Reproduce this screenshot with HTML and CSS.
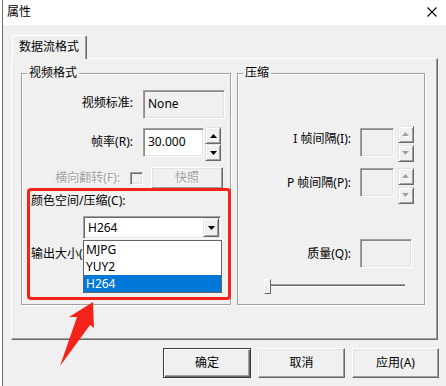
FILE: index.html
```html
<!DOCTYPE html>
<html lang="zh-CN">
<head>
<meta charset="utf-8">
<title>属性</title>
<link rel="stylesheet" href="styles.css">
</head>
<body>
<div class="titlebar">
  <span class="title">属性</span>
  <svg class="close" width="10" height="10" viewBox="0 0 10 10"><path d="M0.5 0.5 L9.5 9.5 M9.5 0.5 L0.5 9.5" stroke="#000" stroke-width="1.1" fill="none"/></svg>
</div>
<div class="content">
  <div class="tabs"><div class="tab">数据流格式</div></div>
  <div class="panel">
    <div class="group group-video">
      <div class="legend">视频格式</div>
      <div class="row row-std">
        <span class="lbl">视频标准:</span>
        <div class="edit ro edit-none">None</div>
      </div>
      <div class="row row-fps">
        <span class="lbl">帧率(R):</span>
        <div class="edit edit-fps">30.000</div>
        <div class="spin">
          <div class="sbtn"><svg width="7" height="4" viewBox="0 0 7 4"><polygon points="3.5,0 7,4 0,4" fill="#000"/></svg></div>
          <div class="sbtn"><svg width="7" height="4" viewBox="0 0 7 4"><polygon points="0,0 7,0 3.5,4" fill="#000"/></svg></div>
        </div>
      </div>
      <div class="row row-flip">
        <span class="lbl lbl-flip disabled">横向翻转(F):</span>
        <span class="check"></span>
        <div class="btn btn-snap disabled">快照</div>
      </div>
      <div class="plain-label">颜色空间/压缩(C):</div>
      <div class="combo-wrap">
        <div class="combo">
          <span class="combo-text">H264</span>
          <span class="combo-btn"><svg width="7" height="4" viewBox="0 0 7 4"><polygon points="0,0 7,0 3.5,4" fill="#000"/></svg></span>
        </div>
        <ul class="dropdown">
          <li>MJPG</li>
          <li>YUY2</li>
          <li class="sel">H264</li>
        </ul>
      </div>
      <div class="plain-label out-label">输出大小(S):</div>
    </div>
    <div class="group group-comp">
      <div class="legend">压缩</div>
      <div class="row rrow row-i">
        <span class="lbl rlbl">I 帧间隔(I):</span>
        <div class="edit ro redit"></div>
        <div class="spin rspin">
          <div class="sbtn"><svg width="8" height="5" viewBox="0 0 8 5"><polygon points="4.5,1 8,5 1,5" fill="#fff"/><polygon points="3.5,0 7,4 0,4" fill="#a0a0a0"/></svg></div>
          <div class="sbtn"><svg width="8" height="5" viewBox="0 0 8 5"><polygon points="1,1 8,1 4.5,5" fill="#fff"/><polygon points="0,0 7,0 3.5,4" fill="#a0a0a0"/></svg></div>
        </div>
      </div>
      <div class="row rrow row-p">
        <span class="lbl rlbl">P 帧间隔(P):</span>
        <div class="edit ro redit"></div>
        <div class="spin rspin">
          <div class="sbtn"><svg width="8" height="5" viewBox="0 0 8 5"><polygon points="4.5,1 8,5 1,5" fill="#fff"/><polygon points="3.5,0 7,4 0,4" fill="#a0a0a0"/></svg></div>
          <div class="sbtn"><svg width="8" height="5" viewBox="0 0 8 5"><polygon points="1,1 8,1 4.5,5" fill="#fff"/><polygon points="0,0 7,0 3.5,4" fill="#a0a0a0"/></svg></div>
        </div>
      </div>
      <div class="row row-q">
        <span class="lbl rlbl">质量(Q):</span>
        <div class="edit ro qedit"></div>
      </div>
      <div class="slider">
        <span class="thumb"></span>
        <span class="track"></span>
      </div>
    </div>
  </div>
  <div class="buttons">
    <div class="btn dbtn default">确定</div>
    <div class="btn dbtn">取消</div>
    <div class="btn dbtn">应用(A)</div>
  </div>
</div>
<div class="annot-box"></div>
<svg class="annot-arrow" width="446" height="386" viewBox="0 0 446 386">
  <polygon points="93,302 94,328 90,325 60,366 77,317 69,317" fill="#f5221a"/>
</svg>
</body>
</html>
```

FILE: styles.css
```css
* { box-sizing: border-box; }
html, body { margin: 0; padding: 0; }
body {
  width: 446px;
  height: 386px;
  overflow: hidden;
  position: relative;
  font-family: "Noto Sans", "Noto Sans CJK SC", sans-serif;
  font-size: 12px;
  color: #000;
  background: linear-gradient(90deg, #fff 0 2px, #6d6d6d 2px 3px, #f0f0f0 3px);
}
.titlebar {
  height: 25px;
  margin-left: 3px;
  background: #fff;
  display: flex;
  align-items: center;
  justify-content: space-between;
  padding: 0 9px 1px 4px;
}
.title { line-height: 16px; }
.close { display: block; }

.content { padding: 10px 0 0 11px; }
.tabs { display: flex; height: 23px; }
.tab {
  position: relative;
  z-index: 1;
  margin-left: 1px;
  width: 75px;
  height: 24px;
  background: #f0f0f0;
  border-top: 1px solid #fff;
  border-left: 1px solid #fff;
  border-right: 1px solid #696969;
  border-radius: 2px 2px 0 0;
  box-shadow: inset -1px 0 0 #a0a0a0;
  padding-left: 6px;
  line-height: 21px;
}
.panel {
  width: 427px;
  height: 282px;
  border: 1px solid;
  border-color: #fff #696969 #696969 #fff;
  box-shadow: inset -1px -1px 0 #a0a0a0;
  display: flex;
  align-items: flex-start;
  gap: 6px;
  padding: 14px 0 0 9px;
}
.group {
  height: 232px;
  border: 1px solid #a0a0a0;
  box-shadow: 1px 1px 0 #fff, inset 1px 1px 0 #fff;
}
.group-video { width: 210px; }
.group-comp { width: 188px; }
.legend {
  width: fit-content;
  height: 16px;
  line-height: 16px;
  margin: -9px 0 0 5px;
  padding: 0 2px;
  background: #f0f0f0;
}
.row { display: flex; align-items: flex-start; }
.lbl {
  width: 121px;
  padding-right: 10px;
  text-align: right;
  line-height: 16px;
  white-space: nowrap;
}
.disabled { color: #a0a0a0; text-shadow: 1px 1px 0 #fff; }

.edit {
  height: 29px;
  background: #fff;
  border: 1px solid;
  border-color: #a0a0a0 #fff #fff #a0a0a0;
  box-shadow: inset 1px 1px 0 #8a8a8a, inset -1px -1px 0 #e3e3e3;
  display: flex;
  align-items: center;
  padding: 0 0 1px 4px;
  line-height: 16px;
}
.edit.ro { background: #f0f0f0; }

.row-std { margin-top: 9px; height: 29px; }
.row-std .lbl { margin-top: 5px; }
.edit-none { width: 82px; }

.row-fps { margin-top: 8px; height: 34px; }
.row-fps .lbl { margin-top: 7px; }
.edit-fps { width: 61px; margin-top: 1px; }
.spin { display: flex; flex-direction: column; gap: 0; margin-left: 1px; }
.sbtn {
  width: 16px;
  height: 17px;
  background: #f0f0f0;
  border: 1px solid;
  border-color: #e3e3e3 #696969 #696969 #e3e3e3;
  box-shadow: inset 1px 1px 0 #fff, inset -1px -1px 0 #a0a0a0;
  display: flex;
  align-items: center;
  justify-content: center;
}
.sbtn svg { display: block; }

.row-flip { margin-top: 6px; height: 22px; align-items: center; }
.lbl-flip { width: 108px; }
.check {
  width: 13px;
  height: 13px;
  border: 1px solid;
  border-color: #a0a0a0 #fff #fff #a0a0a0;
  box-shadow: inset 1px 1px 0 #696969, inset -1px -1px 0 #e3e3e3;
  background: #f0f0f0;
}
.btn {
  display: flex;
  align-items: center;
  justify-content: center;
  background: #f0f0f0;
  border: 1px solid;
  border-color: #fff #696969 #696969 #fff;
  box-shadow: inset -1px -1px 0 #a0a0a0, inset 1px 1px 0 #e3e3e3;
  line-height: 16px;
}
.btn-snap { width: 72px; height: 22px; margin-left: 8px; }

.plain-label { padding-left: 9px; line-height: 16px; margin-top: 4px; white-space: nowrap; }
.out-label { margin-top: 7px; width: 61px; overflow: hidden; }
.combo-wrap {
  position: relative;
  margin: 7px 0 0 61px;
  width: 138px;
  height: 23px;
}
.combo {
  width: 138px;
  height: 23px;
  background: #fff;
  border: 1px solid;
  border-color: #a0a0a0 #fff #fff #a0a0a0;
  box-shadow: inset 1px 1px 0 #696969, inset -1px -1px 0 #e3e3e3;
  display: flex;
  align-items: center;
  justify-content: space-between;
  padding: 1px 1px 1px 4px;
}
.combo-text { line-height: 16px; }
.combo-btn {
  width: 16px;
  height: 19px;
  background: #f0f0f0;
  border: 1px solid;
  border-color: #e3e3e3 #696969 #696969 #e3e3e3;
  box-shadow: inset 1px 1px 0 #fff, inset -1px -1px 0 #a0a0a0;
  display: flex;
  align-items: center;
  justify-content: center;
}
.combo-btn svg { display: block; }
.dropdown {
  position: absolute;
  z-index: 2;
  top: 24px;
  left: 0;
  width: 139px;
  height: 53px;
  margin: 0;
  padding: 0;
  list-style: none;
  background: #fff;
  border: 1px solid #646464;
}
.dropdown li { height: 17px; line-height: 17px; padding-left: 2px; }
.dropdown li.sel { background: #0078d7; color: #fff; }

.rrow { align-items: flex-start; }
.rlbl { width: 122px; padding-right: 9px; }
.redit { width: 34px; }
.rspin { margin-left: 4px; gap: 2px; }
.row-i { margin-top: 45px; height: 36px; }
.row-i .rlbl { margin-top: 5px; }
.row-i .redit { margin-top: 2px; }
.row-p { margin-top: 6px; height: 36px; }
.row-p .rlbl { margin-top: 7px; }
.row-q { margin-top: 35px; height: 29px; }
.row-q .rlbl { margin-top: 7px; }
.qedit { width: 52px; }

.slider {
  display: flex;
  align-items: flex-start;
  margin: 11px 0 0 26px;
  height: 15px;
}
.thumb {
  width: 7px;
  height: 15px;
  border: 1px solid;
  border-color: #fff #696969 #696969 #fff;
  background: repeating-linear-gradient(45deg, #e6e6e6 0 1px, #fafafa 1px 2px);
}
.track {
  width: 134px;
  height: 3px;
  margin-top: 5px;
  border-top: 1px solid #a0a0a0;
  border-bottom: 1px solid #fff;
  background: #696969;
}

.buttons {
  display: flex;
  gap: 7px;
  margin: 8px 0 0 152px;
}
.dbtn { width: 87px; height: 30px; }
.dbtn.default {
  width: 88px;
  border: 1px solid #3c3c3c;
  box-shadow: inset 1px 1px 0 #fff, inset -1px -1px 0 #696969, inset -2px -2px 0 #a0a0a0;
}

.annot-box {
  position: absolute;
  left: 27px;
  top: 188px;
  width: 204px;
  height: 112px;
  border: 3px solid #f5221a;
  border-radius: 4px;
  z-index: 3;
}
.annot-arrow {
  position: absolute;
  left: 0;
  top: 0;
  z-index: 3;
  pointer-events: none;
}
```
